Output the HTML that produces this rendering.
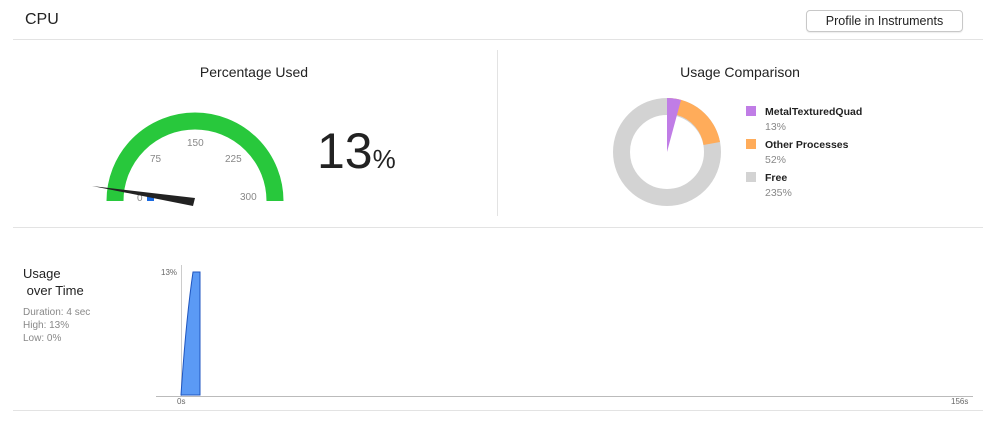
<!DOCTYPE html>
<html><head><style>
body{margin:0;width:996px;height:432px;background:#fff;font-family:"Liberation Sans",sans-serif;position:relative;overflow:hidden}
.a{position:absolute}
</style></head><body>
<div class="a" style="left:25px;top:11px;font-size:16px;color:#222">CPU</div>
<div class="a" style="left:806px;top:10px;width:155px;height:20px;border:1px solid #c8c8c8;border-radius:4px;font-size:12.5px;color:#222;text-align:center;line-height:20px;box-shadow:0 1px 1px rgba(0,0,0,.08)">Profile in Instruments</div>
<div class="a" style="left:13px;top:39px;width:970px;height:1px;background:#e3e3e3"></div>
<div class="a" style="left:497px;top:50px;width:1px;height:166px;background:#e3e3e3"></div>
<div class="a" style="left:13px;top:227px;width:970px;height:1px;background:#e3e3e3"></div>
<div class="a" style="left:13px;top:410px;width:970px;height:1px;background:#e3e3e3"></div>
<div class="a" style="left:0;width:508px;top:64px;text-align:center;font-size:14px;color:#222">Percentage Used</div>
<div class="a" style="left:486px;width:508px;top:64px;text-align:center;font-size:14px;color:#222">Usage Comparison</div>
<svg class="a" style="left:0;top:0" width="996" height="432">
<path d="M115 201 A80 80 0 0 1 275 201" fill="none" stroke="#28c83c" stroke-width="17"/>
<g font-size="10" fill="#888" font-family="Liberation Sans">
<text x="150" y="162">75</text><text x="187" y="146">150</text><text x="225" y="162">225</text><text x="240" y="200">300</text><text x="137" y="201">0</text></g>
<rect x="147" y="196" width="7" height="5" fill="#1a6ae0"/>
<path d="M92 186 L195 198 L193 206 Z" fill="#222"/>
<circle cx="667" cy="152" r="45.5" fill="none" stroke="#d3d3d3" stroke-width="17"/>
<path d="M667 98 A54 54 0 0 1 720 142 L703.5 145 A37 37 0 0 0 677 115 Z" fill="#ffac5a"/>
<path d="M667 98 A54 54 0 0 1 681 100 L667 152 Z" fill="#c07de6"/>
<rect x="746" y="106" width="10" height="10" fill="#c07de6"/>
<rect x="746" y="139" width="10" height="10" fill="#ffac5a"/>
<rect x="746" y="172" width="10" height="10" fill="#d3d3d3"/>
<g font-family="Liberation Sans" font-size="10.5"><text x="765" y="115" font-weight="bold" fill="#222">MetalTexturedQuad</text><text x="765" y="130" fill="#888">13%</text>
<text x="765" y="148" font-weight="bold" fill="#222">Other Processes</text><text x="765" y="163" fill="#888">52%</text>
<text x="765" y="181" font-weight="bold" fill="#222">Free</text><text x="765" y="196" fill="#888">235%</text></g>
<line x1="181.5" y1="265" x2="181.5" y2="396" stroke="#ccc"/>
<line x1="156" y1="396.5" x2="973" y2="396.5" stroke="#bbb"/>
<path d="M181 395 Q186 320 193 272 L200 272 L200 395 Z" fill="#5b9af5" stroke="#1f56c0" stroke-width="1"/>
<g font-family="Liberation Sans" font-size="8" fill="#666"><text x="161" y="275">13%</text><text x="177" y="404">0s</text><text x="951" y="404">156s</text></g>
</svg>
<div class="a" style="left:317px;top:122px;font-size:50px;color:#222;font-weight:300">13<span style="font-size:26px">%</span></div>
<div class="a" style="left:23px;top:265px;font-size:13px;color:#222;line-height:17px">Usage<br>&nbsp;over Time</div>
<div class="a" style="left:23px;top:306px;font-size:10px;color:#888;line-height:13px">Duration: 4 sec<br>High: 13%<br>Low: 0%</div>
</body></html>
